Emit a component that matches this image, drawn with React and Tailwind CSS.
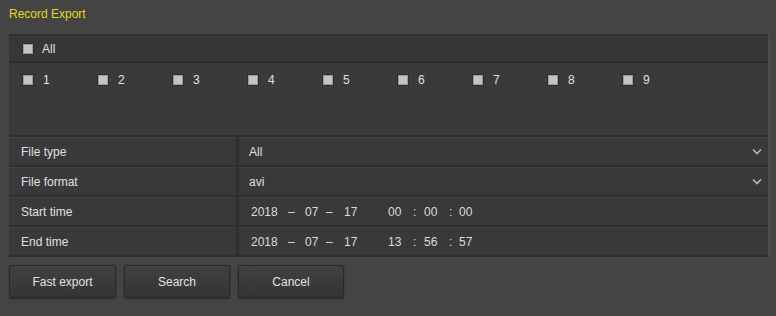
import React from "react";

const channels = [1, 2, 3, 4, 5, 6, 7, 8, 9];

function Box() {
  return <span className="inline-block w-[10px] h-[10px] bg-[#c4c4c4] border border-[#9a9a9a] shadow-[0_0_0_1px_#2c2c2c]" />;
}

function Chevron() {
  return (
    <svg className="w-[10px] h-[7px]" viewBox="0 0 10 7" fill="none" stroke="#b8b8b8" strokeWidth="1.6">
      <path d="M1 1.5l4 4 4-4" />
    </svg>
  );
}

function DateTime({ date, time }) {
  return (
    <div className="flex items-center text-[12px] text-[#dcdcdc]">
      <span className="w-[37px]">{date[0]}</span>
      <span className="w-[17px]">–</span>
      <span className="w-[21px]">{date[1]}</span>
      <span className="w-[18px]">–</span>
      <span className="w-[44px]">{date[2]}</span>
      <span className="w-[25px]">{time[0]}</span>
      <span className="w-[11px]">:</span>
      <span className="w-[25px]">{time[1]}</span>
      <span className="w-[10px]">:</span>
      <span>{time[2]}</span>
    </div>
  );
}

function Row({ label, children }) {
  return (
    <div className="flex h-[30px] border-b-2 border-[#2f2f2f] gap-[3px] bg-[#2f2f2f]">
      <div className="w-[227px] bg-[#393939] border-t border-[#424242] flex items-center pl-[12px] text-[12px] text-[#e0e0e0]">
        {label}
      </div>
      <div className="flex-1 bg-[#393939] border-t border-[#424242] flex items-center pl-[10px] pr-[6px]">
        {children}
      </div>
    </div>
  );
}

function Button({ children, w }) {
  return (
    <button className={`${w} h-[33px] rounded-[2px] border border-[#2a2a2a] bg-gradient-to-b from-[#414141] to-[#343434] shadow-[0_1px_2px_#2a2a2a] text-[12px] text-[#e2e2e2]`}>
      {children}
    </button>
  );
}

export default function App() {
  return (
    <div className="w-[776px] h-[316px] bg-[#444444] font-[Liberation_Sans,Arial,sans-serif] overflow-hidden">
      <div className="pl-[9px] pt-[5px] h-[34px] text-[12px] text-[#e0d820]">Record Export</div>

      <div className="ml-[9px] w-[761px] border-r-2 border-[#4c4c4c]">
        <div className="border-t-2 border-[#2f2f2f] bg-[#373737] h-[27px] flex items-center pl-[14px] gap-[9px] text-[12px] text-[#e0e0e0]">
          <Box />
          <span>All</span>
        </div>
        <div className="border-t-2 border-[#2c2c2c] bg-[#3a3a3a] h-[76px] border-b-2 border-b-[#2f2f2f] pt-[8px] pl-[14px] flex items-start">
          {channels.map((c) => (
            <div key={c} className="w-[75px] flex items-center gap-[10px] text-[12px] text-[#e0e0e0]">
              <Box />
              <span>{c}</span>
            </div>
          ))}
        </div>
        <Row label="File type">
          <span className="flex-1 text-[12px] text-[#e0e0e0]">All</span>
          <Chevron />
        </Row>
        <Row label="File format">
          <span className="flex-1 text-[12px] text-[#e0e0e0]">avi</span>
          <Chevron />
        </Row>
        <Row label="Start time">
          <div className="pl-[2px]"><DateTime date={["2018", "07", "17"]} time={["00", "00", "00"]} /></div>
        </Row>
        <Row label="End time">
          <div className="pl-[2px]"><DateTime date={["2018", "07", "17"]} time={["13", "56", "57"]} /></div>
        </Row>
      </div>

      <div className="flex gap-[8px] pl-[9px] mt-[8px]">
        <Button w="w-[107px]">Fast export</Button>
        <Button w="w-[106px]">Search</Button>
        <Button w="w-[106px]">Cancel</Button>
      </div>
    </div>
  );
}
